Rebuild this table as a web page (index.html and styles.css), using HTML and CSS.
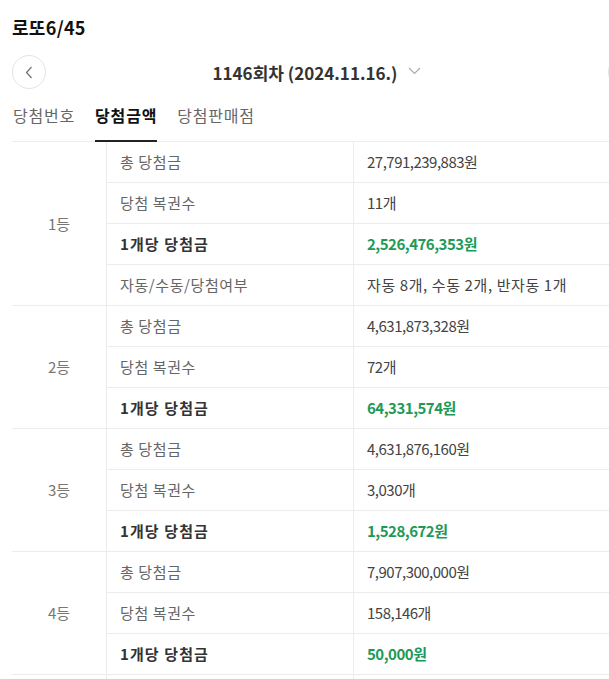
FILE: index.html
```html
<!DOCTYPE html>
<html>
<head>
    <title>로또6/45 당첨금액</title>
    <meta name="viewport" content="width=device-width, initial-scale=1">
    <link rel="stylesheet" href="styles.css">
</head>
<body>
    <div class="container">
        <h1>로또6/45</h1>

        <div class="round-nav">
            <button class="nav-btn" type="button" aria-label="이전 회차">
                <svg width="8" height="13" viewBox="0 0 8 13"><path d="M6.5 1 L1.5 6.5 L6.5 12" fill="none" stroke="#777" stroke-width="1.3"/></svg>
            </button>
            <div class="round-title">
                1146회차 (2024.11.16.)
                <svg class="chev" width="13" height="8" viewBox="0 0 13 8"><path d="M1 1 L6.5 6.5 L12 1" fill="none" stroke="#aaa" stroke-width="1.1"/></svg>
            </div>
            <button class="nav-btn" type="button" aria-label="다음 회차">
                <svg width="8" height="13" viewBox="0 0 8 13"><path d="M1.5 1 L6.5 6.5 L1.5 12" fill="none" stroke="#777" stroke-width="1.3"/></svg>
            </button>
        </div>

        <div class="tabs">
            <a class="tab">당첨번호</a>
            <a class="tab active">당첨금액</a>
            <a class="tab">당첨판매점</a>
        </div>

        <table class="prize">
            <tr>
                <td class="rank" rowspan="4">1등</td>
                <td class="label">총 당첨금</td>
                <td class="value">27,791,239,883원</td>
            </tr>
            <tr>
                <td class="label">당첨 복권수</td>
                <td class="value">11개</td>
            </tr>
            <tr>
                <td class="label strong">1개당 당첨금</td>
                <td class="value money">2,526,476,353원</td>
            </tr>
            <tr>
                <td class="label">자동/수동/당첨여부</td>
                <td class="value note">자동 8개, 수동 2개, 반자동 1개</td>
            </tr>

            <tr>
                <td class="rank" rowspan="3">2등</td>
                <td class="label">총 당첨금</td>
                <td class="value">4,631,873,328원</td>
            </tr>
            <tr>
                <td class="label">당첨 복권수</td>
                <td class="value">72개</td>
            </tr>
            <tr>
                <td class="label strong">1개당 당첨금</td>
                <td class="value money">64,331,574원</td>
            </tr>

            <tr>
                <td class="rank" rowspan="3">3등</td>
                <td class="label">총 당첨금</td>
                <td class="value">4,631,876,160원</td>
            </tr>
            <tr>
                <td class="label">당첨 복권수</td>
                <td class="value">3,030개</td>
            </tr>
            <tr>
                <td class="label strong">1개당 당첨금</td>
                <td class="value money">1,528,672원</td>
            </tr>

            <tr>
                <td class="rank" rowspan="3">4등</td>
                <td class="label">총 당첨금</td>
                <td class="value">7,907,300,000원</td>
            </tr>
            <tr>
                <td class="label">당첨 복권수</td>
                <td class="value">158,146개</td>
            </tr>
            <tr>
                <td class="label strong">1개당 당첨금</td>
                <td class="value money">50,000원</td>
            </tr>

            <tr>
                <td class="rank" rowspan="3">5등</td>
                <td class="label">총 당첨금</td>
                <td class="value">9,291,720,000원</td>
            </tr>
            <tr>
                <td class="label">당첨 복권수</td>
                <td class="value">1,858,344개</td>
            </tr>
            <tr>
                <td class="label strong">1개당 당첨금</td>
                <td class="value money">5,000원</td>
            </tr>
        </table>
    </div>
</body>
</html>
```

FILE: styles.css
```css
body {
    margin: 0;
    font-family: "Noto Sans CJK KR", "Noto Sans", sans-serif;
    color: #222;
    background: #fff;
    overflow: hidden;
}
.container {
    width: 630px;
    padding: 0 12px;
}
h1 {
    margin: 0;
    padding-top: 14px;
    font-size: 18px;
    line-height: 26px;
    font-weight: 700;
    color: #111;
    letter-spacing: 0.3px;
}
.round-nav {
    display: flex;
    align-items: center;
    margin-top: 15px;
    height: 34px;
}
.nav-btn {
    width: 34px;
    height: 34px;
    border: 1px solid #e4e4e4;
    border-radius: 50%;
    background: #fff;
    display: flex;
    align-items: center;
    justify-content: center;
    padding: 0;
    flex: none;
}
.round-title {
    flex: 1;
    display: flex;
    align-items: center;
    justify-content: center;
    gap: 11px;
    padding-right: 20px;
    font-size: 17px;
    font-weight: 700;
    color: #333;
}
.chev {
    margin-top: -3px;
}
.tabs {
    display: flex;
    gap: 20px;
    margin-top: 7px;
    padding-left: 1px;
}
.tab {
    padding: 7px 0 13px;
    font-size: 16px;
    line-height: 24px;
    letter-spacing: 0.8px;
    color: #666;
    border-bottom: 2px solid transparent;
}
.tab.active {
    font-weight: 700;
    color: #111;
    border-bottom-color: #222;
}
.prize {
    width: 100%;
    border-collapse: collapse;
    margin-top: -1px;
    font-size: 15px;
    line-height: 20px;
}
.prize tr {
    height: 41px;
}
.prize td {
    padding: 0;
    border: 1px solid #ececec;
    border-left: none;
    border-right: none;
}
.prize td.rank {
    width: 94px;
    text-align: center;
    color: #777;
    border-right: 1px solid #ececec;
}
.prize td.label {
    width: 233px;
    padding-left: 13px;
    color: #666;
    letter-spacing: 0.6px;
    border-right: 1px solid #ececec;
}
.prize td.label.strong {
    font-weight: 700;
    color: #333;
    letter-spacing: 1.1px;
}
.prize td.value {
    padding-left: 13px;
    color: #444;
    letter-spacing: -0.5px;
}
.prize td.value.note {
    letter-spacing: 0.6px;
}
.prize td.value.money {
    font-weight: 700;
    color: #1d9a57;
}
```
